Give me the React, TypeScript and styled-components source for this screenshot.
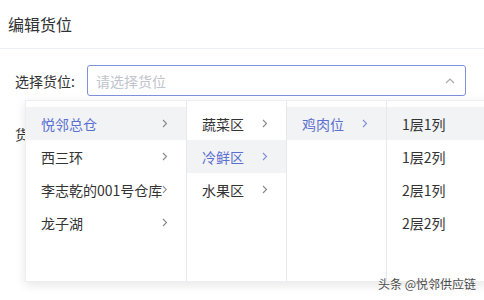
import React from 'react';
import styled, {createGlobalStyle} from 'styled-components';

const GlobalStyle = createGlobalStyle`
  html, body {
    margin: 0;
    padding: 0;
    background: #fff;
    overflow: hidden;
  }
  body {
    font-family: "Noto Sans CJK SC", "Liberation Sans", sans-serif;
    color: #333;
  }
`

const Dialog = styled.div`
  position: relative;
  width: 484px;
  height: 300px;
  overflow: hidden;
`

const Header = styled.div`
  height: 47px;
  display: flex;
  align-items: center;
  padding: 0 8px;
  padding-bottom: 1px;
  font-size: 16px;
  color: #303133;
  border-bottom: 1px solid #ebeef5;
`

const Body = styled.div`
  display: flex;
  flex-direction: column;
  gap: 28px;
  padding: 16px 18px 0 15px;
`

const FormRow = styled.div`
  display: flex;
  align-items: center;
  gap: 12px;
`

const Label = styled.label`
  width: 60px;
  font-size: 14px;
  color: #333;
  white-space: nowrap;
`

const SelectBox = styled.div`
  flex: 1;
  height: 29px;
  display: flex;
  align-items: center;
  padding: 0 10px 0 8px;
  border: 1px solid #7f91dc;
  border-radius: 3px;
  font-size: 14px;
  color: #c0c4cc;
`

const Placeholder = styled.span`
  flex: 1;
`

const Menu = styled.div`
  position: absolute;
  left: 25px;
  top: 100px;
  height: 180px;
  display: flex;
  background: #fff;
  border: 1px solid #eceef2;
  box-shadow: 0 3px 10px rgba(0, 0, 0, 0.1);
`

const Column = styled.ul<{ $width: number }>`
  box-sizing: border-box;
  width: ${p => p.$width}px;
  margin: 0;
  padding: 6px 0;
  list-style: none;
  border-right: 1px solid #e6e8ec;

  &:last-child {
    border-right: none;
  }
`

const Item = styled.li<{ $active?: boolean; $hover?: boolean }>`
  height: 33px;
  display: flex;
  align-items: center;
  padding: 0 18px 0 15px;
  font-size: 14px;
  white-space: nowrap;
  color: ${p => (p.$active ? '#5b6fd0' : '#333')};
  background: ${p => (p.$active || p.$hover ? '#f2f3f5' : 'transparent')};
`

const ItemText = styled.span`
  flex: 1;
`

const Watermark = styled.div`
  position: absolute;
  right: 8px;
  bottom: 8px;
  font-size: 12px;
  color: #4a4a4a;
  text-shadow: 0 0 2px #fff, 0 0 2px #fff;
`

const Arrow = ({color = '#888'}: { color?: string }) => (
  <svg width="6" height="9" viewBox="0 0 6 9">
    <path d="M1 1 L4.5 4.5 L1 8" fill="none" stroke={color} strokeWidth="1.1"/>
  </svg>
)

const UpArrow = () => (
  <svg width="10" height="6" viewBox="0 0 10 6">
    <path d="M1 5 L5 1 L9 5" fill="none" stroke="#a8abb2" strokeWidth="1.2"/>
  </svg>
)

type Option = { label: string; active?: boolean; hover?: boolean; leaf?: boolean }

const columns: { width: number; options: Option[] }[] = [
  {
    width: 161,
    options: [
      {label: '悦邻总仓', active: true},
      {label: '西三环'},
      {label: '李志乾的001号仓库'},
      {label: '龙子湖'},
    ],
  },
  {
    width: 100,
    options: [
      {label: '蔬菜区'},
      {label: '冷鲜区', active: true},
      {label: '水果区'},
    ],
  },
  {
    width: 100,
    options: [{label: '鸡肉位', active: true}],
  },
  {
    width: 100,
    options: [
      {label: '1层1列', leaf: true, hover: true},
      {label: '1层2列', leaf: true},
      {label: '2层1列', leaf: true},
      {label: '2层2列', leaf: true},
    ],
  },
]

const App = () => {
  return (
    <>
      <GlobalStyle/>
      <Dialog>
        <Header>编辑货位</Header>
        <Body>
          <FormRow>
            <Label>选择货位:</Label>
            <SelectBox>
              <Placeholder>请选择货位</Placeholder>
              <UpArrow/>
            </SelectBox>
          </FormRow>
          <FormRow>
            <Label>货位状态:</Label>
          </FormRow>
        </Body>

        <Menu>
          {columns.map((col, i) => (
            <Column key={i} $width={col.width}>
              {col.options.map(opt => (
                <Item key={opt.label} $active={opt.active} $hover={opt.hover}>
                  <ItemText>{opt.label}</ItemText>
                  {!opt.leaf && <Arrow color={opt.active && i > 0 ? '#7d8ed8' : '#888'}/>}
                </Item>
              ))}
            </Column>
          ))}
        </Menu>

        <Watermark>头条 @悦邻供应链</Watermark>
      </Dialog>
    </>
  )
}

export default App;
